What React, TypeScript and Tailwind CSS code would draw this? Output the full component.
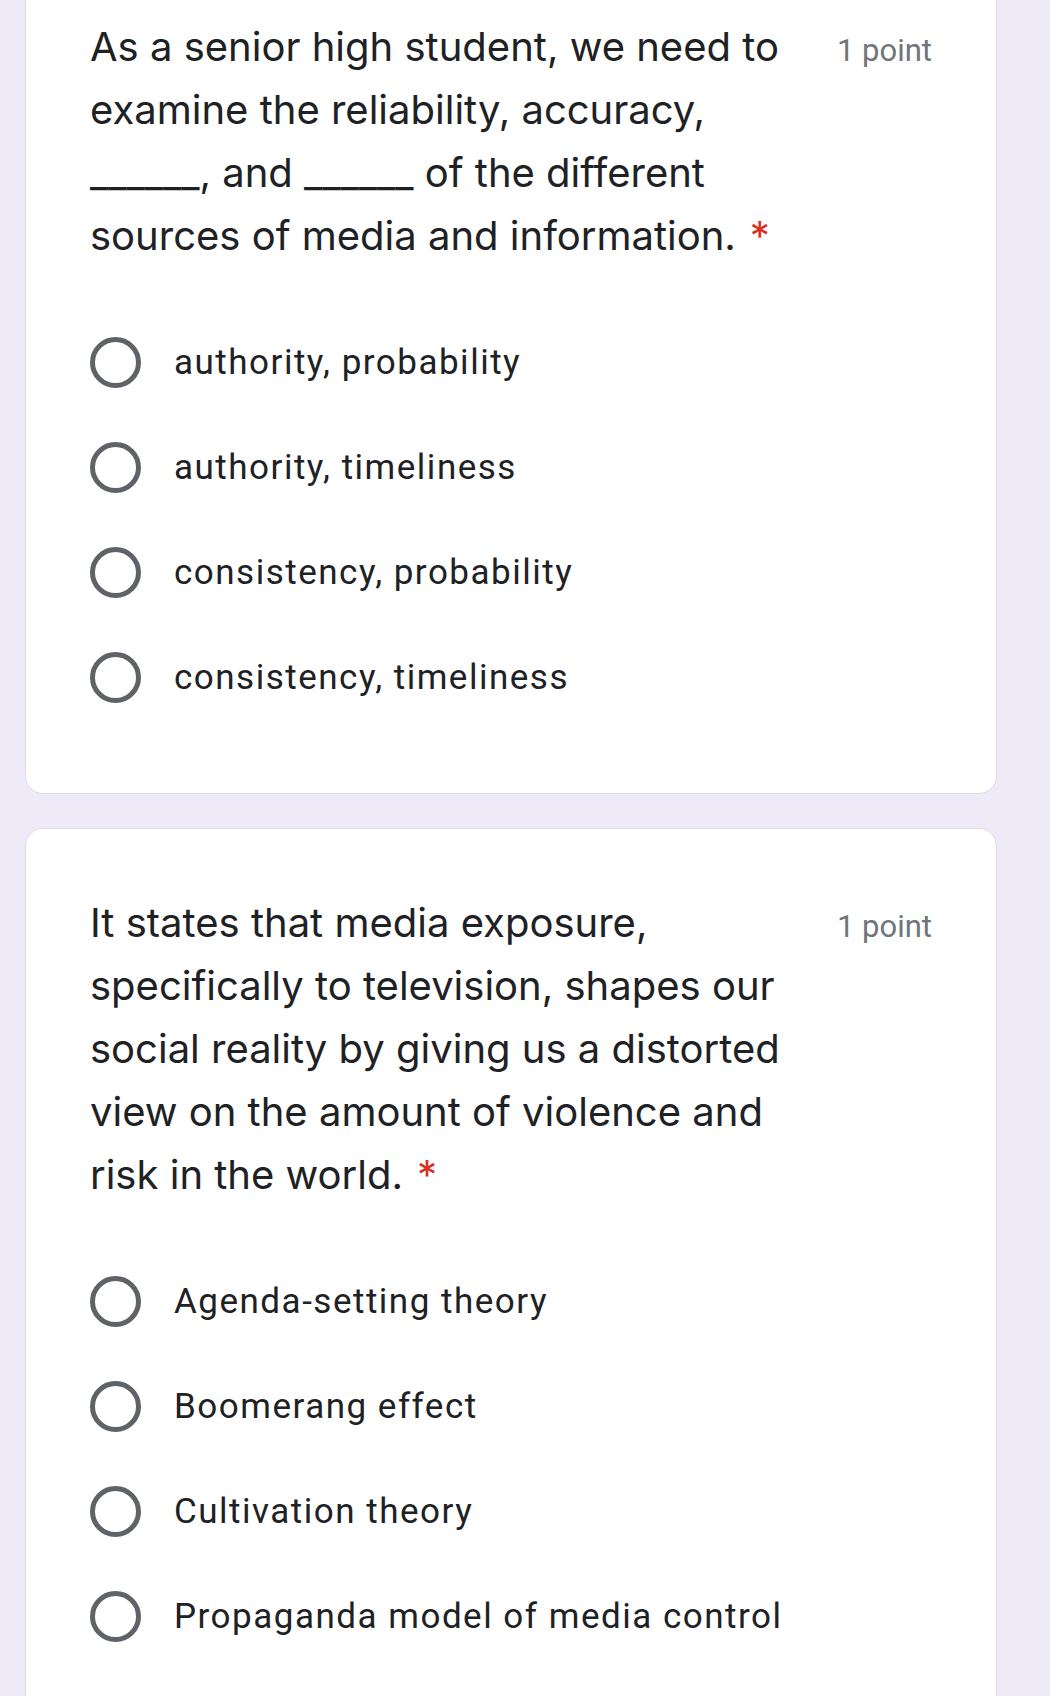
import type { ReactNode } from "react";

type Question = {
  lines: ReactNode[];
  options: string[];
};

const questions: Question[] = [
  {
    lines: [
      "As a senior high student, we need to",
      "examine the reliability, accuracy,",
      "______, and ______ of the different",
      "sources of media and information.",
    ],
    options: [
      "authority, probability",
      "authority, timeliness",
      "consistency, probability",
      "consistency, timeliness",
    ],
  },
  {
    lines: [
      "It states that media exposure,",
      "specifically to television, shapes our",
      "social reality by giving us a distorted",
      "view on the amount of violence and",
      "risk in the world.",
    ],
    options: [
      "Agenda-setting theory",
      "Boomerang effect",
      "Cultivation theory",
      "Propaganda model of media control",
    ],
  },
];

function Radio({ label }: { label: string }) {
  return (
    <div className="flex h-[105px] items-center gap-[33px]">
      <div className="h-[51px] w-[51px] shrink-0 rounded-full border-[5px] border-[#5f6368]" />
      <span className="pt-[2px] font-['Roboto',sans-serif] text-[35px] tracking-[1.5px] text-[#202124]">
        {label}
      </span>
    </div>
  );
}

function QuestionCard({ q }: { q: Question }) {
  const last = q.lines.length - 1;
  return (
    <div className="rounded-[18px] border border-[#dadce0] bg-white pt-[62px] pb-[63px] pl-[64px] pr-[64px]">
      <div className="flex items-baseline justify-between">
        <p className="font-['Inter',sans-serif] text-[40px] leading-[63px] text-[#202124] whitespace-nowrap">
          {q.lines.map((line, i) => (
            <span key={i}>
              {line}
              {i === last ? (
                <span className="pl-[14px] text-[#d93025]">*</span>
              ) : (
                <br />
              )}
            </span>
          ))}
        </p>
        <span className="font-['Roboto',sans-serif] text-[31px] text-[#70757a]">1 point</span>
      </div>
      <div className="mt-[43px] flex flex-col">
        {q.options.map((o) => (
          <Radio key={o} label={o} />
        ))}
      </div>
    </div>
  );
}

export default function App() {
  return (
    <div className="h-[1696px] w-[1050px] overflow-hidden bg-[#eeeaf8]">
      <div className="mt-[-48px] ml-[25px] mr-[53px] flex flex-col gap-[34px]">
        {questions.map((q, i) => (
          <QuestionCard key={i} q={q} />
        ))}
      </div>
    </div>
  );
}
